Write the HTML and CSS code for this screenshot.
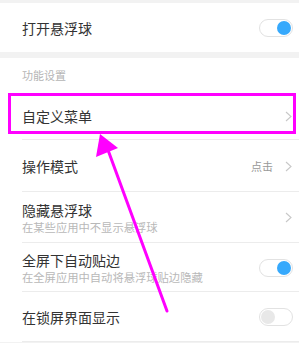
FILE: index.html
```html
<!DOCTYPE html>
<html>
<head>
<meta charset="utf-8">
<link rel="stylesheet" href="styles.css">
</head>
<body>
<div class="page">
  <div class="card top">
    <div class="row r1">
      <div class="label"><div class="title">打开悬浮球</div></div>
      <span class="toggle on"><span class="knob"></span></span>
    </div>
  </div>
  <div class="card main">
    <div class="header">功能设置</div>
    <div class="row r-menu">
      <div class="label"><div class="title">自定义菜单</div></div>
      <svg class="chev" width="7" height="11" viewBox="0 0 7 11"><polyline points="1,1 6,5.5 1,10" fill="none" stroke="#c8c8c8" stroke-width="1.1"/></svg>
    </div>
    <div class="row r-mode">
      <div class="label"><div class="title">操作模式</div></div>
      <span class="value">点击</span>
      <svg class="chev" width="7" height="11" viewBox="0 0 7 11"><polyline points="1,1 6,5.5 1,10" fill="none" stroke="#c8c8c8" stroke-width="1.1"/></svg>
    </div>
    <div class="row r-hide">
      <div class="label"><div class="title">隐藏悬浮球</div><div class="sub">在某些应用中不显示悬浮球</div></div>
      <svg class="chev" width="7" height="11" viewBox="0 0 7 11"><polyline points="1,1 6,5.5 1,10" fill="none" stroke="#c8c8c8" stroke-width="1.1"/></svg>
    </div>
    <div class="row r-full">
      <div class="label"><div class="title">全屏下自动贴边</div><div class="sub">在全屏应用中自动将悬浮球贴边隐藏</div></div>
      <span class="toggle on"><span class="knob"></span></span>
    </div>
    <div class="row r-lock">
      <div class="label"><div class="title">在锁屏界面显示</div></div>
      <span class="toggle off"><span class="knob"></span></span>
    </div>
  </div>
  <div class="highlight"></div>
  <svg class="arrow" width="299" height="343" viewBox="0 0 299 343">
    <line x1="108" y1="150" x2="167" y2="311" stroke="#f0f" stroke-width="3" stroke-linecap="round"/>
    <polygon points="100,134 96,157 118,148" fill="#f0f"/>
  </svg>
</div>
</body>
</html>
```
FILE: styles.css
```css
* { box-sizing: border-box; }
html, body { margin: 0; padding: 0; }
body {
  background: #f2f2f2;
  font-family: "Noto Sans CJK SC", "Noto Sans", sans-serif;
  width: 299px;
  height: 343px;
  overflow: hidden;
}
.page {
  position: relative;
  padding-top: 3px;
  height: 343px;
}
.card { background: #fff; }
.card.top { margin-bottom: 6px; }
.row {
  display: flex;
  align-items: center;
  padding-left: 22px;
  padding-right: 7px;
  position: relative;
}
.row::after {
  content: "";
  position: absolute;
  left: 22px;
  right: 0;
  bottom: 0;
  border-bottom: 1px solid #ececec;
}
.r1::after { display: none; }
.r-menu::after, .r-mode::after { }
.r1 { height: 49px; }
.header {
  height: 34px;
  padding-left: 22px;
  padding-top: 9px;
  font-size: 11px;
  color: #b5b5b5;
  line-height: 16px;
}
.r-menu { height: 48px; }
.r-mode { height: 52px; }
.r-hide { height: 51px; }
.r-full { height: 49px; }
.r-lock { height: 50px; }
.label { flex: 1; min-width: 0; }
.title {
  font-size: 14px;
  color: #333;
  line-height: 18px;
}
.sub {
  font-size: 11.3px;
  color: #b8b8b8;
  line-height: 15px;
  margin-top: 1px;
  white-space: nowrap;
}
.r-hide .label { padding-top: 0; }
.value {
  font-size: 11px;
  color: #999;
  margin-right: 12px;
}
.chev { display: block; margin-right: 0; }
.toggle {
  width: 34px;
  height: 18px;
  border: 1px solid #e2e2e2;
  border-radius: 9px;
  background: #fff;
  display: flex;
  align-items: center;
  padding: 0 1px;
  margin-right: -1px;
}
.toggle.on { justify-content: flex-end; }
.toggle .knob {
  width: 14px;
  height: 14px;
  border-radius: 50%;
}
.toggle.on .knob { background: #36a9fc; }
.toggle.off .knob { background: #e8e8e8; }
.highlight {
  position: absolute;
  left: 8px;
  top: 93px;
  width: 288px;
  height: 41px;
  border: 3px solid #f0f;
}
.arrow {
  position: absolute;
  left: 0;
  top: 0;
}
```
